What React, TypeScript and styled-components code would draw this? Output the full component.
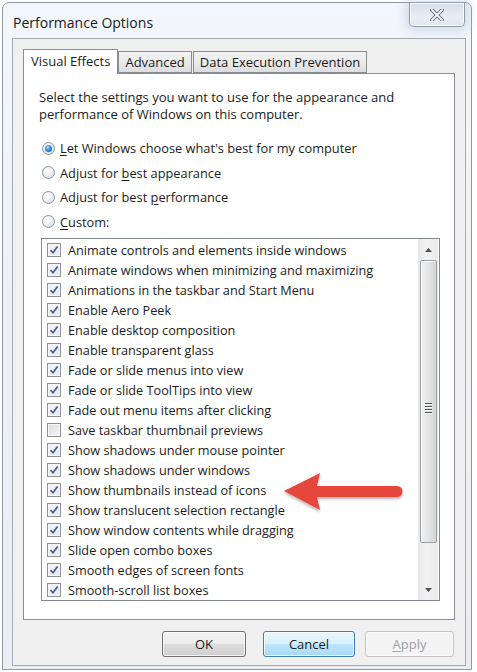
import React from 'react'
import styled, { createGlobalStyle } from 'styled-components'

const GlobalStyle = createGlobalStyle`
  html, body {
    margin: 0;
    padding: 0;
    background: #ffffff;
  }
  body {
    font-family: "Open Sans", "Noto Sans", "DejaVu Sans", sans-serif;
    color: #1c1c1c;
  }
`

const Page = styled.div`
  width: 477px;
  height: 672px;
  padding: 2px 0 0 2px;
  box-sizing: border-box;
  position: relative;
`

const Window = styled.div`
  width: 470px;
  height: 668px;
  box-sizing: border-box;
  border: 1px solid #8e99a6;
  border-radius: 7px 7px 0 0;
  background: linear-gradient(180deg, #f3f6fa 0%, #eef2f7 40%, #e9eef4 100%);
  display: flex;
  flex-direction: column;
  padding: 0 5px 3px 9px;
`

const TitleBar = styled.div`
  height: 35px;
  display: flex;
  align-items: flex-start;
`

const Title = styled.div`
  font-size: 14px;
  line-height: 14px;
  margin: 13px 0 0 1px;
  color: #1a1a1a;
`

const CloseButton = styled.div`
  margin-left: auto;
  margin-right: 1px;
  width: 56px;
  height: 24px;
  box-sizing: border-box;
  border: 1px solid #8f9aa8;
  border-top: none;
  border-radius: 0 0 5px 5px;
  background: linear-gradient(180deg, #d6dee8 0%, #e9eef4 60%, #dfe6ee 100%);
  box-shadow: inset 0 0 0 1px rgba(255, 255, 255, 0.8), 0 0 10px 4px rgba(150, 175, 205, 0.35);
  display: flex;
  align-items: center;
  justify-content: center;
`

const Client = styled.div`
  flex: 1;
  border: 1px solid #a3acb6;
  background: #f0f0f0;
  display: flex;
  flex-direction: column;
  padding: 10px 10px 0 10px;
`

const TabRow = styled.div`
  display: flex;
  align-items: flex-end;
  height: 24px;
  position: relative;
  z-index: 1;
`

const Tab = styled.div<{ $active?: boolean }>`
  box-sizing: border-box;
  height: ${p => (p.$active ? '25px' : '22px')};
  margin-bottom: ${p => (p.$active ? '-1px' : '0')};
  margin-right: ${p => (p.$active ? '0' : '1px')};
  padding: ${p => (p.$active ? '3px 7px 0 7px' : '2px 6px 0 6px')};
  border: 1px solid #898c95;
  border-bottom: ${p => (p.$active ? 'none' : '1px solid #898c95')};
  background: ${p =>
    p.$active ? '#ffffff' : 'linear-gradient(180deg, #f2f2f2 0%, #ebebeb 50%, #dddddd 100%)'};
  font-size: 13px;
  line-height: 17px;
  white-space: nowrap;
`

const Panel = styled.div`
  height: 547px;
  box-sizing: border-box;
  border: 1px solid #898c95;
  background: #ffffff;
  padding: 15px 15px 0 17px;
  display: flex;
  flex-direction: column;
`

const Description = styled.div`
  font-size: 13px;
  line-height: 17px;
  margin-left: -2px;
`

const RadioGroup = styled.div`
  display: flex;
  flex-direction: column;
  margin-top: 13px;
`

const RadioRow = styled.div`
  display: flex;
  align-items: center;
  height: 24.5px;
  font-size: 12.8px;
`

const RadioDot = styled.span<{ $checked?: boolean }>`
  width: 13px;
  height: 13px;
  box-sizing: border-box;
  border-radius: 50%;
  border: 1px solid #8b96a3;
  background: radial-gradient(circle at 40% 35%, #ffffff 0%, #e6e9ec 60%, #cdd2d7 100%);
  margin: 0 5px 0 1px;
  display: flex;
  align-items: center;
  justify-content: center;
  &::after {
    content: '';
    display: ${p => (p.$checked ? 'block' : 'none')};
    width: 7px;
    height: 7px;
    border-radius: 50%;
    background: radial-gradient(circle at 40% 35%, #a9e2ff 0%, #2e8fd6 45%, #0b4f9a 100%);
  }
`

const Accel = styled.u`
  text-decoration: underline;
  text-underline-offset: 2px;
`

const ListBox = styled.div`
  margin-top: 4px;
  width: 399px;
  height: 363px;
  box-sizing: border-box;
  border: 1px solid #828790;
  display: flex;
  position: relative;
`

const Items = styled.div`
  flex: 1;
  padding-top: 1px;
`

const Item = styled.div`
  height: 20px;
  display: flex;
  align-items: center;
  padding-left: 5px;
  font-size: 12.7px;
  white-space: nowrap;
`

const CheckBox = styled.span<{ $checked?: boolean }>`
  width: 14px;
  height: 14px;
  box-sizing: border-box;
  border: 1px solid #8f8f8f;
  background: ${p =>
    p.$checked
      ? 'linear-gradient(135deg, #f4f6fb 0%, #e3e7f2 100%)'
      : 'linear-gradient(135deg, #dcdcdc 0%, #f4f4f4 100%)'};
  box-shadow: inset 0 0 0 1px #f7f7f7;
  margin-right: 7px;
  display: flex;
  align-items: center;
  justify-content: center;
  flex-shrink: 0;
`

const ScrollBar = styled.div`
  width: 20px;
  margin-right: 1px;
  background: linear-gradient(90deg, #e7e7e7 0%, #f2f2f2 40%, #ebebeb 100%);
  display: flex;
  flex-direction: column;
  align-items: center;
`

const ArrowButton = styled.div`
  height: 21px;
  width: 100%;
  display: flex;
  align-items: center;
  justify-content: center;
`

const Thumb = styled.div`
  width: 17px;
  height: 283px;
  box-sizing: border-box;
  border: 1px solid #9a9ea6;
  border-radius: 2px;
  background: linear-gradient(90deg, #f0f0f0 0%, #e4e4e4 50%, #d3d4d6 100%);
  box-shadow: inset 1px 1px 0 #fbfbfb;
  display: flex;
  align-items: center;
  justify-content: center;
`

const Grip = styled.div`
  width: 7px;
  display: flex;
  flex-direction: column;
  gap: 2px;
  margin-top: 12px;
  span {
    height: 1px;
    background: #4f5358;
    box-shadow: 0 1px 0 #ffffff;
  }
`

const Spacer = styled.div`
  flex: 1;
`

const ButtonRow = styled.div`
  display: flex;
  justify-content: flex-end;
  align-items: center;
  margin-top: 11px;
  padding-right: 1px;
`

const Button = styled.div<{ $w: number; $gap: number; $focused?: boolean; $disabled?: boolean }>`
  width: ${p => p.$w}px;
  height: 26px;
  margin-left: ${p => p.$gap}px;
  box-sizing: border-box;
  border: 1px solid ${p => (p.$focused ? '#3c7fb1' : p.$disabled ? '#c4c4c4' : '#707070')};
  border-radius: 3px;
  background: ${p =>
    p.$disabled
      ? '#f4f4f4'
      : p.$focused
        ? 'linear-gradient(180deg, #eaf6fd 0%, #d9f0fc 50%, #bee6fd 51%, #a7d9f5 100%)'
        : 'linear-gradient(180deg, #f2f2f2 0%, #ebebeb 50%, #dddddd 51%, #cfcfcf 100%)'};
  box-shadow: inset 0 0 0 1px ${p => (p.$disabled ? '#fafafa' : 'rgba(255,255,255,0.75)')};
  color: ${p => (p.$disabled ? '#a0a0a0' : '#1c1c1c')};
  font-size: 13px;
  display: flex;
  align-items: center;
  justify-content: center;
`

const Arrow = styled.svg`
  position: absolute;
  left: 280px;
  top: 467px;
  overflow: visible;
`

const effects: [string, boolean][] = [
  ['Animate controls and elements inside windows', true],
  ['Animate windows when minimizing and maximizing', true],
  ['Animations in the taskbar and Start Menu', true],
  ['Enable Aero Peek', true],
  ['Enable desktop composition', true],
  ['Enable transparent glass', true],
  ['Fade or slide menus into view', true],
  ['Fade or slide ToolTips into view', true],
  ['Fade out menu items after clicking', true],
  ['Save taskbar thumbnail previews', false],
  ['Show shadows under mouse pointer', true],
  ['Show shadows under windows', true],
  ['Show thumbnails instead of icons', true],
  ['Show translucent selection rectangle', true],
  ['Show window contents while dragging', true],
  ['Slide open combo boxes', true],
  ['Smooth edges of screen fonts', true],
  ['Smooth-scroll list boxes', true],
]

const Check = () => (
  <svg width="10" height="10" viewBox="0 0 10 10">
    <path d="M1.5 5.2 L4 7.8 L8.6 1.6" fill="none" stroke="#4a5e96" strokeWidth="1.7" />
  </svg>
)

const App = () => (
  <Page>
    <GlobalStyle />
    <Window>
      <TitleBar>
        <Title>Performance Options</Title>
        <CloseButton>
          <svg width="14" height="12" viewBox="0 0 14 12">
            <path
              d="M2 1 L12 11 M12 1 L2 11"
              stroke="#5d6670"
              strokeWidth="3.6"
              strokeLinecap="round"
            />
            <path
              d="M2 1 L12 11 M12 1 L2 11"
              stroke="#f4f6f8"
              strokeWidth="1.8"
              strokeLinecap="round"
            />
          </svg>
        </CloseButton>
      </TitleBar>
      <Client>
        <TabRow>
          <Tab $active>Visual Effects</Tab>
          <Tab>Advanced</Tab>
          <Tab>Data Execution Prevention</Tab>
        </TabRow>
        <Panel>
          <Description>
            Select the settings you want to use for the appearance and
            <br />
            performance of Windows on this computer.
          </Description>
          <RadioGroup>
            <RadioRow>
              <RadioDot $checked />
              <span>
                <Accel>L</Accel>et Windows choose what's best for my computer
              </span>
            </RadioRow>
            <RadioRow>
              <RadioDot />
              <span>
                Adjust for <Accel>b</Accel>est appearance
              </span>
            </RadioRow>
            <RadioRow>
              <RadioDot />
              <span>
                Adjust for best <Accel>p</Accel>erformance
              </span>
            </RadioRow>
            <RadioRow>
              <RadioDot />
              <span>
                <Accel>C</Accel>ustom:
              </span>
            </RadioRow>
          </RadioGroup>
          <ListBox>
            <Items>
              {effects.map(([label, on]) => (
                <Item key={label}>
                  <CheckBox $checked={on}>{on && <Check />}</CheckBox>
                  {label}
                </Item>
              ))}
            </Items>
            <ScrollBar>
              <ArrowButton>
                <svg width="7" height="4" viewBox="0 0 7 4">
                  <path d="M0 4 L3.5 0 L7 4 Z" fill="#4d5157" />
                </svg>
              </ArrowButton>
              <Thumb>
                <Grip>
                  <span />
                  <span />
                  <span />
                  <span />
                </Grip>
              </Thumb>
              <Spacer />
              <ArrowButton>
                <svg width="7" height="4" viewBox="0 0 7 4">
                  <path d="M0 0 L7 0 L3.5 4 Z" fill="#4d5157" />
                </svg>
              </ArrowButton>
            </ScrollBar>
          </ListBox>
        </Panel>
        <ButtonRow>
          <Button $w={84} $gap={0}>OK</Button>
          <Button $w={92} $gap={17} $focused>Cancel</Button>
          <Button $w={89} $gap={10} $disabled>
            <span>
              <Accel>A</Accel>pply
            </span>
          </Button>
        </ButtonRow>
      </Client>
    </Window>
    <Arrow width="124" height="46" viewBox="0 0 124 46">
      <defs>
        <filter id="sh" x="-10%" y="-20%" width="130%" height="160%">
          <feDropShadow dx="0" dy="2" stdDeviation="1.5" floodColor="#000" floodOpacity="0.3" />
        </filter>
      </defs>
      <g filter="url(#sh)">
        <path d="M4 24 L40 6 L37 19 L117 19 A5.5 5.5 0 0 1 117 30 L37 30 L40 43 Z" fill="#e5463e" />
      </g>
    </Arrow>
  </Page>
)

export default App
